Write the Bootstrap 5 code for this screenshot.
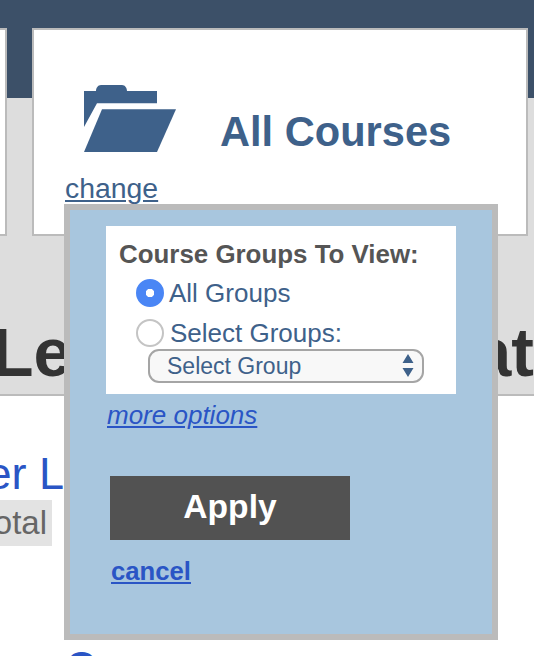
<!DOCTYPE html>
<html lang="en">
<head>
<meta charset="utf-8">
<title>All Courses</title>
<link href="https://cdn.jsdelivr.net/npm/bootstrap@5.3.0/dist/css/bootstrap.min.css" rel="stylesheet">
<style>
html,body{height:100%;overflow:hidden}
body{font-family:"Liberation Sans",Arial,sans-serif;background:#fff;color:#333;position:relative}
.hero{height:396px;border-bottom:2px solid #bbb;background:linear-gradient(#3c5068 98px,#ddd 98px);padding-top:28px;overflow:hidden}
.tile{height:208px;background:#fff;border:2px solid #bbb}
.tile-left{width:7px;margin-right:25px;border-left:0}
.tile-main{width:496px;padding:55px 0 0 50px}
.tile-title{font-size:41.6px;font-weight:700;color:#3e618a;margin:23px 0 0 44px;line-height:48px}
.change-link{font-size:28.4px;color:#3e618a;line-height:34px;margin:15px 0 0 -19px;display:inline-block}
.big-title{font-size:68px;font-weight:700;line-height:78px;margin-top:77px;color:#333;margin-left:-8px}
.lower-link{font-size:45px;line-height:52px;color:#2a55c5;margin-top:52px;width:64px;overflow:hidden;white-space:nowrap;display:flex;justify-content:flex-end}
.total-tag{background:#e3e3e3;color:#666;font-size:33px;line-height:46px;width:52px;padding-right:5px;overflow:hidden;white-space:nowrap;display:flex;justify-content:flex-end}
.tail-row{font-size:40px;font-weight:700;color:#2a55c5;line-height:46px;margin:97px 0 0 66px}
.pop{position:absolute;left:64px;top:204px;width:434px;height:436px;background:#a8c6de;border:6px solid #bbb;padding:16px 0 0 36px}
.pick-box{width:350px;height:168px;background:#fff;padding:14px 0 0 13px;color:#3e618a;font-size:26px}
.pick-title{font-size:25.9px;font-weight:700;color:#555;line-height:28px;margin-bottom:11px}
.pick-row{display:flex;align-items:center;margin-left:17px;height:28px;line-height:28px}
.pick-row+.pick-row{margin-top:12px}
.pick-row .form-check-input{width:28px;height:28px;margin:0;flex:none;border:2px solid #c4c4c4;background-color:#fff}
.pick-row .form-check-input:checked{background-color:#4a86f5;border-color:#4a86f5;background-image:radial-gradient(circle,#fff 0 4px,transparent 4.5px)}
.pick-row label{margin-left:5px}
.pick-row+.pick-row label{margin-left:6px}
.group-select{width:276px;height:34px;margin:2px 0 0 29px;border:2px solid #a5a5a5;border-radius:11px;background-color:#f8f8f8;color:#3e618a;font-size:23px;line-height:28px;padding:0 30px 0 17px;box-shadow:none;
background-image:url("data:image/svg+xml,%3Csvg xmlns='http://www.w3.org/2000/svg' viewBox='0 0 12 26'%3E%3Cpath fill='%233e618a' d='M6 1l5.500 9H.5zM.5 15h11L6 24z'/%3E%3C/svg%3E");background-size:12px 26px;background-position:right 8px center}
.more-link{display:inline-block;font-size:26px;font-style:italic;color:#2a55c5;line-height:30px;margin:6px 0 0 1px}
.apply-btn{display:block;width:240px;height:64px;margin:45px 0 0 4px;background:#525252;border:0;border-radius:0;color:#fff;font-size:33.6px;font-weight:700;padding:0 0 2px}
.cancel-link{display:inline-block;font-size:25.7px;font-weight:700;color:#2a55c5;line-height:30px;margin:16px 0 0 5px}
</style>
</head>
<body>
<div class="hero">
  <div class="d-flex flex-nowrap">
    <div class="tile tile-left flex-shrink-0"></div>
    <div class="tile tile-main flex-shrink-0">
      <div class="d-flex align-items-start">
        <svg width="92" height="67" viewBox="84 85 92 67" class="flex-shrink-0" aria-hidden="true">
          <path fill="#3e618a" d="M84 91h12c0-3 2-6 5-6h21c3 0 5 3 5 6h30v12.300H97L84 127z"/>
          <path fill="#3e618a" d="M102 109.300h74L157 152H84z"/>
        </svg>
        <div class="tile-title">All Courses</div>
      </div>
      <a href="#" class="change-link">change</a>
    </div>
  </div>
  <div class="big-title d-flex justify-content-between text-nowrap"><span>Le</span><span>at</span></div>
</div>
<div class="lower-link"><span>er&nbsp;L</span></div>
<div class="total-tag"><span>otal</span></div>
<div class="tail-row">O</div>
<div class="pop">
  <div class="pick-box">
    <div class="pick-title">Course Groups To View:</div>
    <div class="pick-row"><input class="form-check-input" type="radio" name="grp" id="g1" checked><label for="g1">All Groups</label></div>
    <div class="pick-row"><input class="form-check-input" type="radio" name="grp" id="g2"><label for="g2">Select Groups:</label></div>
    <select class="form-select group-select"><option>Select Group</option></select>
  </div>
  <a href="#" class="more-link">more options</a>
  <button type="button" class="btn apply-btn">Apply</button>
  <a href="#" class="cancel-link">cancel</a>
</div>
<script src="https://cdn.jsdelivr.net/npm/bootstrap@5.3.0/dist/js/bootstrap.bundle.min.js"></script>
</body>
</html>
